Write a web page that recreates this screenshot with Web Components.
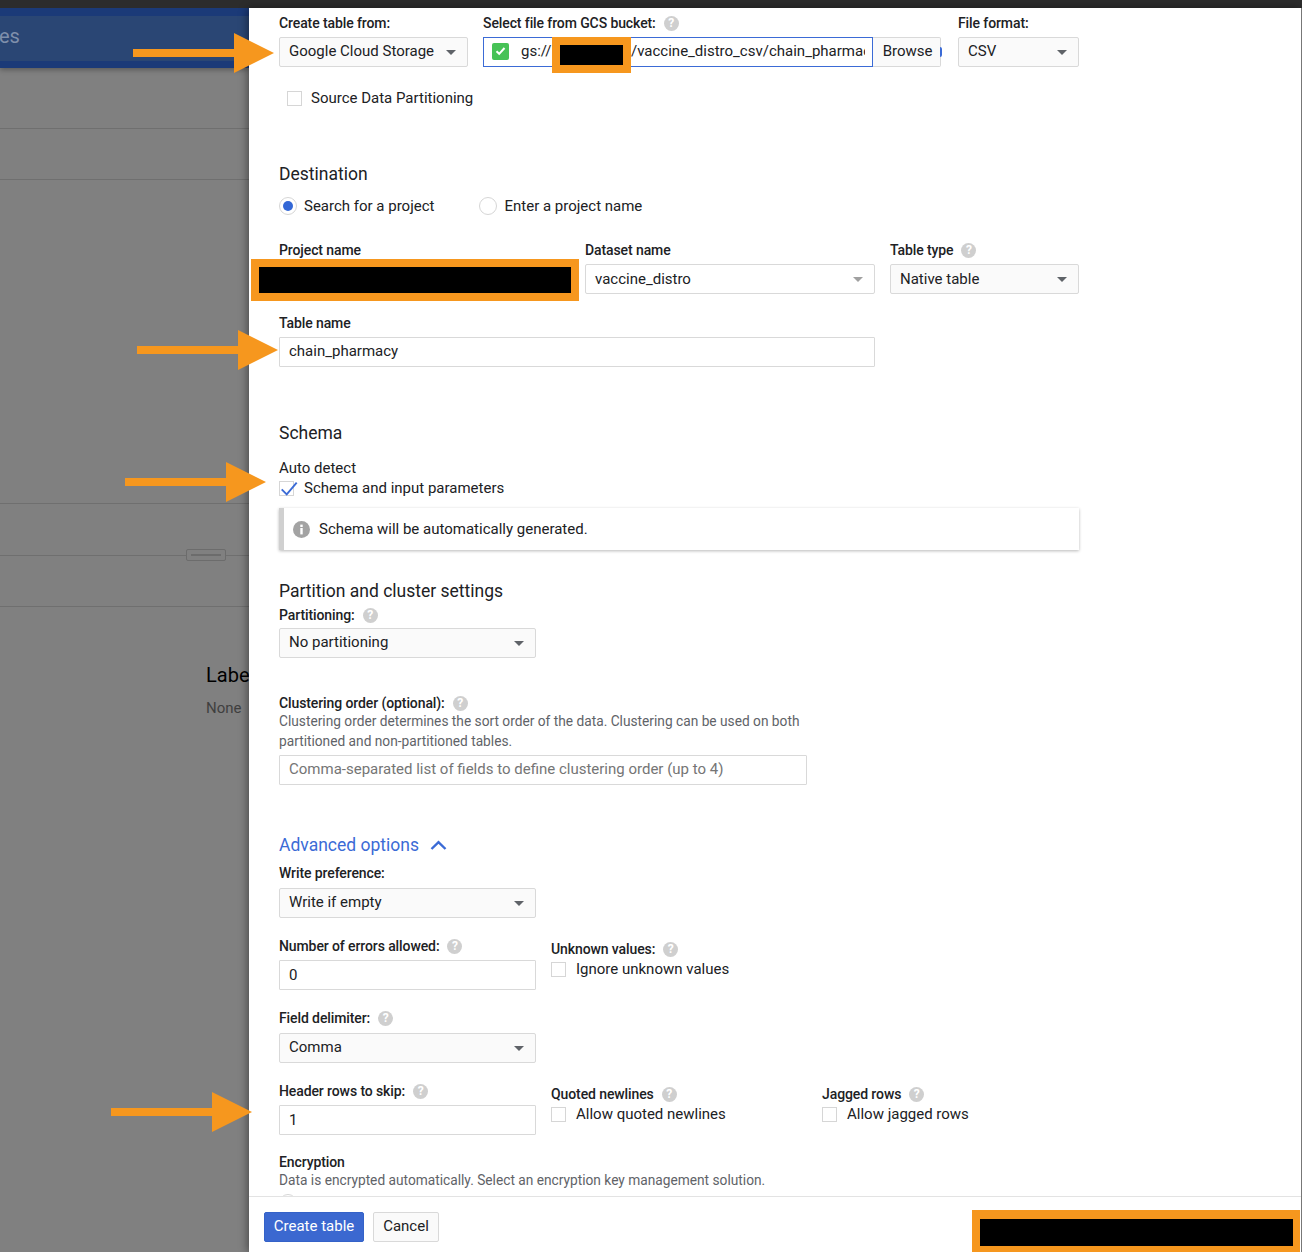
<!DOCTYPE html>
<html lang="en">
<head>
<meta charset="utf-8">
<title>Create table</title>
<style>
  html, body { margin: 0; padding: 0; }
  body { width: 1302px; height: 1252px; overflow: hidden; font-family: Roboto, "Liberation Sans", sans-serif; font-size: 15px; color: #202124; background: #808080; }
</style>
</head>
<body>
<create-table-page></create-table-page>

<script>
// small helper so each element only has to give its css and markup
class Base extends HTMLElement {
  constructor() {
    super();
    this.attachShadow({ mode: 'open' });
  }
  connectedCallback() {
    this.shadowRoot.innerHTML = `<style>${this.css()}</style>${this.html()}`;
  }
  css() { return ':host { display: block; }'; }
  html() { return '<slot></slot>'; }
}

class HelpIcon extends Base {
  css() {
    return `:host { display: inline-flex; width: 15px; height: 15px; border-radius: 50%; background: #cfcfcf; color: #fff;
      align-items: center; justify-content: center; font: 700 12px/15px Roboto, sans-serif; }`;
  }
  html() { return '?'; }
}

class FieldLabel extends Base {
  css() {
    return `:host { display: flex; align-items: center; gap: 8px; height: 20px; font-weight: 500; font-size: 14px; letter-spacing: -.1px; color: #202124; white-space: nowrap; }`;
  }
  html() {
    return `<span><slot></slot></span>${this.hasAttribute('help') ? '<help-icon></help-icon>' : ''}`;
  }
}

class SelectBox extends Base {
  css() {
    return `:host { display: flex; align-items: center; justify-content: space-between; box-sizing: border-box; height: 30px; margin-top: 4px;
        padding: 0 11px 0 9px; background: #fafafa; border: 1px solid #d9d9d9; border-radius: 2px; white-space: nowrap; }
      :host([plain]) { background: #fff; }
      span { position: relative; top: var(--text-shift, -1px); }
      i { width: 0; height: 0; border-left: 5px solid transparent; border-right: 5px solid transparent; border-top: 5px solid #5f6368; }
      :host([dim]) i { border-top-color: #a0a0a0; }`;
  }
  html() { return '<span><slot></slot></span><i></i>'; }
}

class TextBox extends Base {
  css() {
    return `:host { display: flex; align-items: center; box-sizing: border-box; height: 30px; margin-top: 4px; padding: 0 9px var(--text-lift, 2px);
        background: #fff; border: 1px solid #d9d9d9; border-radius: 1px; white-space: nowrap; }
      :host([placeholder]) { color: #757575; }`;
  }
}

class CheckRow extends Base {
  css() {
    return `:host { display: flex; align-items: center; height: 20px; white-space: nowrap; }
      .box { position: relative; box-sizing: border-box; width: 15px; height: 15px; margin-right: var(--check-gap, 10px); border: 1px solid #d6d6d6; background: #fff; flex: none; }
      svg { position: absolute; left: 0; top: -3px; }`;
  }
  html() {
    const mark = this.hasAttribute('checked')
      ? '<svg width="19" height="18" viewBox="0 0 19 18"><path d="M1.7 10.3 6.7 15.3 16.7 3.7" fill="none" stroke="#3b6bd6" stroke-width="1.9"/></svg>'
      : '';
    return `<span class="box">${mark}</span><slot></slot>`;
  }
}

class RadioRow extends Base {
  css() {
    return `:host { display: inline-flex; align-items: center; height: 20px; white-space: nowrap; }
      .dot { box-sizing: border-box; width: 18px; height: 18px; margin-right: 7px; border: 1px solid #d6d6d6; border-radius: 50%; background: #fff; display: flex; align-items: center; justify-content: center; }
      b { width: 10px; height: 10px; border-radius: 50%; background: #3367d6; }`;
  }
  html() {
    return `<span class="dot">${this.hasAttribute('checked') ? '<b></b>' : ''}</span><slot></slot>`;
  }
}

class SectionTitle extends Base {
  css() {
    return `:host { display: block; height: 24px; line-height: 24px; font-size: 17.5px; color: #202124; white-space: nowrap; }
      :host([link]) { display: flex; align-items: center; gap: 11px; color: #3b6bd6; }`;
  }
  html() {
    const chev = this.hasAttribute('link')
      ? '<svg width="17" height="11" viewBox="0 0 17 11"><path d="M1.5 9 8.5 2.2 15.5 9" fill="none" stroke="#3b6bd6" stroke-width="2.4"/></svg>'
      : '';
    return `<slot></slot>${chev}`;
  }
}

class InfoNotice extends Base {
  css() {
    return `:host { display: flex; align-items: center; box-sizing: border-box; width: 800px; height: 42px; margin-top: 10px; padding-left: 9px;
        border-left: 5px solid #d0d0d0; background: #fff; box-shadow: 0 1px 3px rgba(0,0,0,.28); }
      svg { margin-right: 9px; }`;
  }
  html() {
    return `<svg width="17" height="17" viewBox="0 0 17 17"><circle cx="8.5" cy="8.5" r="8.5" fill="#a3a3a3"/><rect x="7.3" y="7" width="2.4" height="6.4" fill="#fff"/><rect x="7.3" y="3.6" width="2.4" height="2.4" fill="#fff"/></svg><slot></slot>`;
  }
}

class BucketPicker extends Base {
  css() {
    return `:host { display: flex; height: 30px; margin-top: 4px; position: relative; }
      .path { box-sizing: border-box; width: 391px; display: flex; align-items: center; padding: 0 0 2px 8px; border: 1px solid #3b6bd6; background: #fff; overflow: hidden; white-space: nowrap; }
      .ok { flex: none; width: 17px; height: 17px; border-radius: 2px; background: #46c256; display: flex; align-items: center; justify-content: center; margin-right: 12px; }
      .gs { flex: none; width: 110px; }
      .rest { flex: none; width: 234px; overflow: hidden; }
      .browse { box-sizing: border-box; width: 68px; display: flex; align-items: center; justify-content: center; padding: 0 0 2px 2px; background: #fafafa; border: 1px solid #d9d9d9; border-left: 0; border-radius: 0 2px 2px 0; }
      .sliver { width: 2px; height: 10px; margin: 10px 0 0 -1px; background: #3b6bd6; border-radius: 0 2px 2px 0; }`;
  }
  html() {
    return `<div class="path">
        <span class="ok"><svg width="11" height="10" viewBox="0 0 11 10"><path d="M1.5 5.2 4.2 7.8 9.5 2" fill="none" stroke="#fff" stroke-width="2"/></svg></span>
        <span class="gs">gs://</span>
        <span class="rest">/vaccine_distro_csv/chain_pharmacy</span>
      </div>
      <div class="browse">Browse</div><div class="sliver"></div>`;
  }
}

class BackdropPane extends Base {
  css() {
    return `:host { display: block; width: 249px; height: 1244px; overflow: hidden; flex: none; background: #808080; }
      .band { height: 60px; background: #1b3a78; padding: 8px 0 7px; box-sizing: border-box; box-shadow: 0 2px 5px rgba(0,0,0,.3); }
      .band div { height: 45px; background: #2a4674; color: #7f8fab; font-size: 20px; line-height: 40px; text-indent: -1px; }
      .rule { height: 1px; background: #6f6f6f; }
      .handle { position: relative; }
      .handle span { position: absolute; left: 186px; top: -6px; box-sizing: border-box; width: 40px; height: 12px; border: 1px solid #6c6c6c; border-radius: 2px; background: #808080; }
      .handle span::after { content: ""; position: absolute; left: 4px; right: 4px; top: 4px; height: 2px; background: #6c6c6c; }
      h3 { margin: 56px 0 0 206px; font: 400 20px/24px Roboto, sans-serif; color: #000; white-space: nowrap; }
      p { margin: 11px 0 0 206px; font-size: 15px; line-height: 20px; color: #3f3f3f; }`;
  }
  html() {
    return `<div class="band"><div>es</div></div>
      <div class="rule" style="margin-top:60px"></div>
      <div class="rule" style="margin-top:50px"></div>
      <div class="rule" style="margin-top:323px"></div>
      <div class="rule handle" style="margin-top:51px"><span></span></div>
      <div class="rule" style="margin-top:50px"></div>
      <h3>Labels</h3>
      <p>None</p>`;
  }
}

class FooterBar extends Base {
  css() {
    return `:host { display: flex; flex: none; box-sizing: border-box; height: 56px; padding: 15px 0 0 15px; gap: 9px; align-items: flex-start; background: #fff; border-top: 1px solid #e3e3e3; }
      span { box-sizing: border-box; height: 30px; display: flex; align-items: center; justify-content: center; padding-bottom: 2px; border-radius: 2px; }
      .go { width: 100px; background: #3b68d0; color: #fff; border: 1px solid #3462c8; }
      .no { width: 66px; background: #fafafa; border: 1px solid #d9d9d9; }`;
  }
  html() { return '<span class="go">Create table</span><span class="no">Cancel</span>'; }
}

class MarkupLayer extends Base {
  css() {
    return `:host { position: absolute; left: 0; top: 0; width: 1302px; height: 1252px; pointer-events: none; }
      svg { display: block; }`;
  }
  html() {
    const arrow = (x, y) => `<polygon fill="#f6971e" points="${x},${y - 4} ${x + 101},${y - 4} ${x + 101},${y - 20} ${x + 141},${y} ${x + 101},${y + 20} ${x + 101},${y + 4} ${x},${y + 4}"/>`;
    const blot = (x, y, w, h, pad) => `<rect x="${x}" y="${y}" width="${w}" height="${h}" fill="#f6971e"/><rect x="${x + pad[0]}" y="${y + pad[1]}" width="${w - pad[0] - pad[2]}" height="${h - pad[1] - pad[3]}" fill="#000"/>`;
    return `<svg width="1302" height="1252" viewBox="0 0 1302 1252">
      ${arrow(133, 53)}${arrow(137, 350)}${arrow(125, 482)}${arrow(111, 1112)}
      ${blot(552, 37, 79, 36, [8, 8, 8, 8])}
      ${blot(251, 259, 328, 42, [8, 8, 8, 8])}
      ${blot(972, 1210, 328, 42, [8, 9, 7, 6])}
    </svg>`;
  }
}

class CreateTablePage extends Base {
  css() {
    return `:host { display: block; position: relative; width: 1302px; height: 1252px; overflow: hidden; }
      .top { height: 8px; background: #2c2c2c; }
      .main { display: flex; height: 1244px; }
      .panel { width: 1053px; height: 1244px; display: flex; flex-direction: column; background: #fff; box-shadow: -2px 0 8px rgba(0,0,0,.4); border-right: 1px solid #777; box-sizing: border-box; position: relative; }
      .form { flex: 1; min-height: 0; overflow: hidden; padding: 5px 0 0 30px; }
      .row { display: flex; gap: 15px; }
      .note { color: #5f6368; font-size: 13.72px; line-height: 20px; white-space: nowrap; }
      .c257 { width: 257px; flex: none; }
      .c271 { width: 256px; flex: none; }`;
  }
  html() {
    return `<div class="top"></div>
    <div class="main">
      <backdrop-pane></backdrop-pane>
      <div class="panel">
        <div class="form">
          <div class="row">
            <div style="width:189px"><field-label>Create table from:</field-label><select-box>Google Cloud Storage</select-box></div>
            <div style="width:459px"><field-label help>Select file from GCS bucket:</field-label><bucket-picker></bucket-picker></div>
            <div style="width:121px;margin-left:1px"><field-label>File format:</field-label><select-box>CSV</select-box></div>
          </div>
          <check-row style="margin:21px 0 0 8px;--check-gap:9px">Source Data Partitioning</check-row>

          <section-title style="margin-top:54px">Destination</section-title>
          <div class="row" style="margin-top:10px;gap:45px">
            <radio-row checked>Search for a project</radio-row>
            <radio-row>Enter a project name</radio-row>
          </div>
          <div class="row" style="margin-top:24px;--text-shift:0px">
            <div style="width:291px"><field-label>Project name</field-label><select-box plain dim></select-box></div>
            <div style="width:290px"><field-label>Dataset name</field-label><select-box plain dim>vaccine_distro</select-box></div>
            <div style="width:189px"><field-label help>Table type</field-label><select-box>Native table</select-box></div>
          </div>
          <div style="width:596px;margin-top:19px"><field-label>Table name</field-label><text-box>chain_pharmacy</text-box></div>

          <section-title style="margin-top:54px">Schema</section-title>
          <div style="margin-top:13px;height:20px;line-height:20px">Auto detect</div>
          <check-row checked style="--check-gap:10px">Schema and input parameters</check-row>
          <info-notice>Schema will be automatically generated.</info-notice>

          <section-title style="margin-top:29px">Partition and cluster settings</section-title>
          <div style="width:257px;margin-top:2px"><field-label help>Partitioning:</field-label><select-box style="margin-top:3px">No partitioning</select-box></div>

          <field-label help style="margin-top:35px">Clustering order (optional):</field-label>
          <div class="note" style="margin-top:-2px">Clustering order determines the sort order of the data. Clustering can be used on both<br>partitioned and non-partitioned tables.</div>
          <text-box placeholder style="width:528px">Comma-separated list of fields to define clustering order (up to 4)</text-box>

          <section-title link style="margin-top:48px">Advanced options</section-title>
          <div style="width:257px;margin-top:6px"><field-label>Write preference:</field-label><select-box style="margin-top:5px">Write if empty</select-box></div>

          <div class="row" style="margin-top:18px">
            <div class="c257"><field-label help>Number of errors allowed:</field-label><text-box style="--text-lift:0px">0</text-box></div>
            <div style="padding-top:3px"><field-label help>Unknown values:</field-label><check-row>Ignore unknown values</check-row></div>
          </div>
          <div style="width:257px;margin-top:18px"><field-label help>Field delimiter:</field-label><select-box style="margin-top:5px">Comma</select-box></div>
          <div class="row" style="margin-top:18px">
            <div class="c257"><field-label help>Header rows to skip:</field-label><text-box style="--text-lift:0px">1</text-box></div>
            <div class="c271" style="padding-top:3px"><field-label help>Quoted newlines</field-label><check-row>Allow quoted newlines</check-row></div>
            <div style="padding-top:3px"><field-label help>Jagged rows</field-label><check-row>Allow jagged rows</check-row></div>
          </div>

          <field-label style="margin-top:17px">Encryption</field-label>
          <div class="note" style="margin-top:-2px">Data is encrypted automatically. Select an encryption key management solution.</div>
          <radio-row style="margin-top:3px"></radio-row>
        </div>
        <footer-bar></footer-bar>
      </div>
    </div>
    <markup-layer></markup-layer>`;
  }
}

customElements.define('help-icon', HelpIcon);
customElements.define('field-label', FieldLabel);
customElements.define('select-box', SelectBox);
customElements.define('text-box', TextBox);
customElements.define('check-row', CheckRow);
customElements.define('radio-row', RadioRow);
customElements.define('section-title', SectionTitle);
customElements.define('info-notice', InfoNotice);
customElements.define('bucket-picker', BucketPicker);
customElements.define('backdrop-pane', BackdropPane);
customElements.define('footer-bar', FooterBar);
customElements.define('markup-layer', MarkupLayer);
customElements.define('create-table-page', CreateTablePage);
</script>
</body>
</html>
